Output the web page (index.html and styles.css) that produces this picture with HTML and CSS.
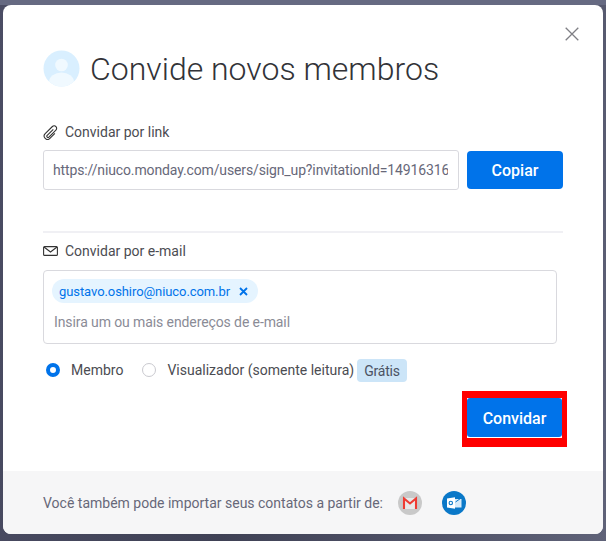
FILE: index.html
```html
<!DOCTYPE html>
<html lang="pt">
<head>
<meta charset="utf-8">
<title>Convide novos membros</title>
<link rel="stylesheet" href="styles.css">
</head>
<body>
<div class="modal">
  <div class="content">
    <button class="close" aria-label="Fechar">
      <svg width="14" height="14" viewBox="0 0 14 14"><path d="M0.7 0.7L13.3 13.3M13.3 0.7L0.7 13.3" stroke="#7f7f85" stroke-width="1.3" fill="none"/></svg>
    </button>
    <div class="header">
      <svg class="avatar" width="37" height="37" viewBox="0 0 37 37"><defs><clipPath id="c"><circle cx="18.5" cy="18.5" r="18"/></clipPath></defs><circle cx="18.5" cy="18.5" r="18" fill="#d9efff"/><g clip-path="url(#c)" fill="#f0f9ff"><circle cx="18.5" cy="15" r="6.3"/><ellipse cx="18.5" cy="32" rx="12.5" ry="9.5"/></g></svg>
      <h1 class="title">Convide novos membros</h1>
    </div>
    <div class="label label-link">
      <svg class="label-icon" width="15" height="15" viewBox="0 0 15 15"><path d="M10.3 4.3L4.2 10.4a1.2 1.2 0 0 0 1.7 1.7l7-7a2.5 2.5 0 0 0-3.5-3.6L2.2 8.7a3.3 3.3 0 0 0 4.7 4.7l5-5" stroke="#333" stroke-width="1.1" fill="none"/></svg>
      <span>Convidar por link</span>
    </div>
    <div class="link-row">
      <div class="link-input"><span class="link-text">https://niuco.monday.com/users/sign_up?invitationId=14916316</span></div>
      <button class="btn btn-copy">Copiar</button>
    </div>
    <hr class="divider">
    <div class="label label-mail">
      <svg class="label-icon" width="15" height="10" viewBox="0 0 15 10"><rect x="0.6" y="0.6" width="13.8" height="8.8" rx="1" stroke="#333" stroke-width="1.1" fill="none"/><path d="M1 1l6.5 5L14 1" stroke="#333" stroke-width="1.1" fill="none"/></svg>
      <span>Convidar por e-mail</span>
    </div>
    <div class="mail-box">
      <div class="chip"><span>gustavo.oshiro@niuco.com.br</span>
        <svg width="9" height="9" viewBox="0 0 9 9"><path d="M1 1l7 7M8 1L1 8" stroke="#0073ea" stroke-width="1.8" fill="none"/></svg>
      </div>
      <div class="placeholder">Insira um ou mais endereços de e-mail</div>
    </div>
    <div class="roles">
      <span class="radio radio-on"></span><span class="role-name role-member">Membro</span>
      <span class="radio"></span><span class="role-name">Visualizador (somente leitura)</span>
      <span class="tag">Grátis</span>
    </div>
    <div class="actions">
      <div class="highlight"><button class="btn btn-invite">Convidar</button></div>
    </div>
  </div>
  <div class="footer">
    <span class="footer-text">Você também pode importar seus contatos a partir de:</span>
    <svg class="gmail" width="24" height="24" viewBox="0 0 24 24"><circle cx="12" cy="12" r="12" fill="#c9c9c9"/><path d="M5 7h14v11H5z" fill="#e8e8e8"/><path d="M6 18V7.5l6 5 6-5V18" stroke="#ee3b33" stroke-width="2.1" fill="none"/></svg>
    <svg class="outlook" width="24" height="24" viewBox="0 0 24 24"><circle cx="12" cy="12" r="12" fill="#0a78c8"/><path d="M13 8h6.5v8.5H13z" fill="#d5eafa"/><path d="M13.5 11l5-3.5" stroke="#0a78c8" stroke-width="1" fill="none"/><path d="M5 7.5l8-1.3v11.6l-8-1.3z" fill="#fff"/><circle cx="8.8" cy="12" r="1.7" fill="none" stroke="#0a78c8" stroke-width="1.1"/></svg>
  </div>
</div>
</body>
</html>
```
FILE: styles.css
```css
* { box-sizing: border-box; }
html, body { margin: 0; height: 541px; overflow: hidden; }
body {
  background: linear-gradient(100deg, #4b4d64 0%, #3f4155 45%, #5f6278 100%);
  font-family: Roboto, "Liberation Sans", sans-serif;
  padding: 5px 3px 6px;
}
body::before {
  content: "";
  position: absolute;
  inset: 0 0 auto 0;
  height: 5px;
  background: #666a82;
}
.modal {
  position: relative;
  width: 600px;
  height: 529px;
  background: #fff;
  border-radius: 8px;
  overflow: hidden;
  display: flex;
  flex-direction: column;
}
.content { flex: 1; position: relative; padding: 0 40px; }
.close {
  position: absolute;
  top: 22px;
  right: 24px;
  padding: 0;
  border: 0;
  background: none;
  display: flex;
}
.header { display: flex; align-items: center; gap: 11px; padding-top: 46px; height: 82px; }
.avatar { flex: none; margin-top: -1px; }
.title { margin: 0 0 0 -1px; font-size: 32px; font-weight: 300; color: #323338; line-height: 37px; }
.label { display: flex; align-items: center; gap: 7px; font-size: 14px; color: #4b4c52; line-height: 18px; }
.label-link { margin-top: 36px; }
.label-mail { margin-top: 9px; }
.label-icon { flex: none; }
.link-row { display: flex; gap: 8px; margin-top: 9px; }
.link-input {
  width: 416px;
  height: 40px;
  border: 1px solid #d9d9de;
  border-radius: 3px;
  padding: 0 10px 0 9px;
  display: flex;
  align-items: center;
  overflow: hidden;
}
.link-text { font-size: 14px; letter-spacing: -0.13px; color: #676879; white-space: nowrap; overflow: hidden; }
.btn {
  width: 96px;
  height: 39px;
  border: 0;
  border-radius: 4px;
  background: #0073ea;
  color: #fff;
  font-family: inherit;
  font-size: 16px;
  font-weight: 500;
  padding: 0;
}
.btn-copy { margin-top: 1px; height: 38px; }
.divider { border: 0; height: 2px; background: #f0f0f4; margin: 41px 0 0; width: 520px; }
.mail-box {
  width: 514px;
  height: 74px;
  margin-top: 10px;
  border: 1px solid #d9d9de;
  border-radius: 4px;
  padding: 8px 8px 0;
}
.chip {
  display: inline-flex;
  align-items: center;
  gap: 9px;
  height: 24px;
  padding: 0 10px 0 7px;
  border-radius: 12px;
  background: #e5f4ff;
  color: #0073ea;
  font-size: 13px;
  letter-spacing: -0.08px;
}
.placeholder { font-size: 14px; letter-spacing: -0.1px; color: #8a8b96; margin: 9px 0 0 2px; line-height: 20px; }
.roles { display: flex; align-items: center; margin: 14px 0 0 3px; height: 24px; font-size: 14px; color: #4b4c52; }
.radio {
  flex: none;
  width: 14px;
  height: 14px;
  border-radius: 50%;
  border: 1px solid #c9c9cf;
  background: #fff;
}
.radio-on { border: 4px solid #0073ea; }
.role-name { margin-left: 11px; }
.role-member { margin-right: 19px; }
.tag {
  margin-left: 3px;
  height: 23px;
  padding: 0 7px;
  border-radius: 4px;
  background: #cce5f8;
  color: #4b5263;
  font-size: 14px;
  letter-spacing: -0.2px;
  line-height: 24px;
}
.actions { display: flex; justify-content: flex-end; margin: 9px -4px 0 0; }
.highlight { border: solid #f00; border-width: 7px 5px 9px; background: #fff; line-height: 0; height: 56px; }
.btn-invite { width: 95px; height: 39px; border-radius: 3px; font-size: 16px; display: block; line-height: 39px; padding-top: 1px; }
.footer {
  height: 63px;
  background: #f6f6f7;
  display: flex;
  align-items: center;
  padding: 0 0 0 40px;
}
.footer-text { font-size: 14px; color: #676879; }
.gmail { margin-left: 15px; flex: none; }
.outlook { margin-left: 20px; flex: none; }
```
